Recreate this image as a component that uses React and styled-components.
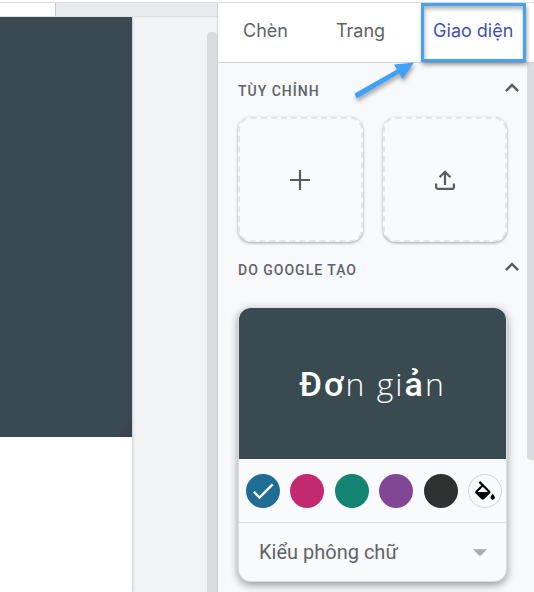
/* App.jsx */

import { useState } from "react";
import styled, { createGlobalStyle } from "styled-components";
import {
    MdArrowDropDown,
    MdCheck,
    MdKeyboardArrowUp,
} from "react-icons/md";

const TABS = ["Chèn", "Trang", "Giao diện"];

const COLORS = [
    { name: "Xanh dương", value: "#1f6c95" },
    { name: "Hồng", value: "#c22a70" },
    { name: "Xanh lục", value: "#148472" },
    { name: "Tím", value: "#824794" },
    { name: "Đen", value: "#2f3030" },
];

const App = () => {
    const [tab, setTab] = useState("Giao diện");
    const [color, setColor] = useState("#1f6c95");

    return (
        <>
            <GlobalStyle />
            <Shell>
                <Editor>
                    <Ruler><RulerStart /></Ruler>
                    <Workspace>
                        <Page><Banner /></Page>
                        <EditorScroll />
                    </Workspace>
                </Editor>
                <Sidebar>
                    <Tabs>
                        {TABS.map((name) => (
                            <Tab key={name} $active={tab === name} onClick={() => setTab(name)}>
                                {name}
                                {name === "Giao diện" && <Highlight />}
                            </Tab>
                        ))}
                    </Tabs>
                    <Pointer viewBox="0 0 70 50" aria-hidden="true">
                        <path d="M6.500 36.500 49 12.600 46 7.500 66 5.500 54.500 22 51.300 16.600 8.700 41.500Z" fill="#3fa2f7" />
                    </Pointer>
                    <PanelBody>
                        <Content>
                            <SectionHead>
                                <SectionTitle>TÙY CHỈNH</SectionTitle>
                                <IconButton aria-label="Thu gọn"><MdKeyboardArrowUp size={28} /></IconButton>
                            </SectionHead>
                            <Tiles>
                                <Tile aria-label="Tạo giao diện">
                                    <svg width="20" height="20" viewBox="0 0 20 20" fill="none" stroke="#5a5c60" strokeWidth="2.2">
                                        <path d="M10 0v20M0 10h20" />
                                    </svg>
                                </Tile>
                                <Tile aria-label="Nhập giao diện">
                                    <svg width="20" height="20" viewBox="0 0 20 20" fill="none" stroke="#5a5c60" strokeWidth="2.2">
                                        <path d="M10 15V2M4.600 7.200 10 1.800l5.400 5.400" />
                                        <path d="M1.100 13.500v3.400a2 2 0 0 0 2 2h13.800a2 2 0 0 0 2-2v-3.400" />
                                    </svg>
                                </Tile>
                            </Tiles>
                            <SectionHead>
                                <SectionTitle>DO GOOGLE TẠO</SectionTitle>
                                <IconButton aria-label="Thu gọn"><MdKeyboardArrowUp size={28} /></IconButton>
                            </SectionHead>
                            <ThemeCard>
                                <Preview>
                                    <Strong>Đơ</Strong>n gi<Strong>ả</Strong>n
                                </Preview>
                                <Swatches>
                                    {COLORS.map((c) => (
                                        <Swatch key={c.value} $color={c.value}>
                                            <input
                                                type="radio"
                                                name="color"
                                                aria-label={c.name}
                                                checked={color === c.value}
                                                onChange={() => setColor(c.value)}
                                            />
                                            {color === c.value && <MdCheck size={28} />}
                                        </Swatch>
                                    ))}
                                    <CustomColor aria-label="Màu tùy chỉnh">
                                        <svg width="22" height="20" viewBox="2 0 20 18" fill="currentColor">
                                            <path d="M16.560 8.940 7.620 0 6.210 1.410l2.380 2.380-5.150 5.150a1.490 1.490 0 0 0 0 2.120l5.500 5.500c.29.29.68.44 1.060.44s.77-.15 1.060-.44l5.500-5.500c.59-.58.59-1.530 0-2.120zM5.210 10 10 5.210 14.790 10zM19 11.500s-2 2.170-2 3.500c0 1.100.9 2 2 2s2-.9 2-2c0-1.330-2-3.500-2-3.500z" />
                                        </svg>
                                    </CustomColor>
                                </Swatches>
                                <FontRow>
                                    <FontSelect aria-label="Kiểu phông chữ">
                                        <option>Kiểu phông chữ</option>
                                    </FontSelect>
                                    <MdArrowDropDown size={34} />
                                </FontRow>
                            </ThemeCard>
                        </Content>
                        <PanelScroll />
                    </PanelBody>
                </Sidebar>
            </Shell>
        </>
    );
};

export default App;

const GlobalStyle = createGlobalStyle`
    * {
        box-sizing: border-box;
    }
    body {
        margin: 0;
        background: #fff;
        font-family: Roboto, "Liberation Sans", sans-serif;
    }
`;

const Shell = styled.div`
    display: flex;
    min-height: 100vh;
    padding-top: 2px;
    overflow: hidden;
`;

/* Editor */
const Editor = styled.main`
    display: flex;
    flex: 1;
    flex-direction: column;
    border-top: 1px solid #dadce0;
`;

const Ruler = styled.div`
    height: 14px;
    background: #e8eaed;
    border-bottom: 1px solid #dcdee0;
`;

const RulerStart = styled.div`
    width: 56px;
    height: 100%;
    background: #fff;
    border-right: 1px solid #c4c6c9;
`;

const Workspace = styled.div`
    display: flex;
    flex: 1;
    justify-content: space-between;
    background: #f1f3f4;
`;

const Page = styled.div`
    width: 132px;
    background: #fff;
    box-shadow: 0 0 3px rgba(0, 0, 0, 0.3);
    clip-path: inset(0 -6px 0 0);
`;

const Banner = styled.div`
    height: 420px;
    background: linear-gradient(135deg, #3a4a52 96%, #39444b 98%);
`;

const EditorScroll = styled.div`
    width: 10px;
    margin-top: 15px;
    border-radius: 4px 4px 0 0;
    background: #dadbdc;
`;

/* Sidebar */
const Sidebar = styled.aside`
    position: relative;
    display: flex;
    flex-direction: column;
    width: 317px;
    border-top: 1px solid #dadce0;
    border-left: 1px solid #d0d2d5;
    background: #fff;
`;

const Tabs = styled.nav`
    display: flex;
    height: 60px;
    padding-left: 25px;
    gap: 48px;
    border-bottom: 1px solid #d3d5d9;
`;

const Button = styled.button`
    padding: 0;
    border: 0;
    background: none;
    cursor: pointer;
`;

const Tab = styled(Button)`
    position: relative;
    padding-bottom: 4px;
    color: ${(props) => (props.$active ? "#3f51b5" : "#5f6368")};
    font-family: Inter, sans-serif;
    font-size: 18px;
    white-space: nowrap;
`;

const Highlight = styled.span`
    position: absolute;
    inset: 0 -13px 0 -12px;
    border: 3px solid #48a3ee;
    box-shadow: 1px 3px 4px rgba(0, 0, 0, 0.35), inset 1px 3px 4px rgba(0, 0, 0, 0.3);
`;

const Pointer = styled.svg`
    position: absolute;
    top: 54px;
    left: 130px;
    width: 70px;
    height: 50px;
    filter: drop-shadow(1px 3px 2px rgba(0, 0, 0, 0.35));
`;

const PanelBody = styled.div`
    display: flex;
    flex: 1;
    background: #f8f9fb;
`;

const Content = styled.div`
    flex: 1;
    padding: 6px 20px 10px;
`;

const SectionHead = styled.div`
    display: flex;
    align-items: center;
    justify-content: space-between;
    height: 44px;
    margin-right: -19px;
`;

const SectionTitle = styled.h2`
    margin: 0;
    color: #5f6368;
    font-size: 14px;
    font-weight: 500;
    letter-spacing: 1px;
`;

const IconButton = styled(Button)`
    display: flex;
    padding-bottom: 6px;
    color: #5a5c60;
`;

const Tiles = styled.div`
    display: grid;
    grid-template-columns: 1fr 1fr;
    gap: 20px;
    margin: 4px 0 6px;
`;

const Tile = styled(Button)`
    display: flex;
    align-items: center;
    justify-content: center;
    height: 125px;
    border: 2px dashed #e6e7e9;
    border-radius: 13px;
    background: #f9fafc;
    box-shadow: 0 1px 3px rgba(0, 0, 0, 0.35);
`;

const ThemeCard = styled.section`
    margin: 16px 1px 0;
    border-radius: 12px;
    background: #f9fafc;
    box-shadow: 0 0 0 1px #dcdee0, 0 3px 8px 1px rgba(0, 0, 0, 0.4);
    overflow: hidden;
`;

const Preview = styled.div`
    height: 151px;
    background: #394a51;
    color: #fff;
    font-family: "Open Sans", sans-serif;
    font-size: 32px;
    font-weight: 300;
    letter-spacing: 2px;
    line-height: 151px;
    text-align: center;
`;

const Strong = styled.span`
    font-family: Roboto, sans-serif;
    font-size: 34px;
    font-weight: 500;
`;

const Swatches = styled.div`
    display: flex;
    align-items: center;
    justify-content: space-between;
    height: 64px;
    padding: 0 4px 0 7px;
    border-bottom: 1px solid #dadce0;
`;

const Swatch = styled.label`
    display: grid;
    place-items: center;
    width: 34px;
    height: 34px;
    border-radius: 50%;
    background: ${(props) => props.$color};
    color: #fff;
    cursor: pointer;

    input {
        grid-area: 1 / 1;
        width: 34px;
        height: 34px;
        margin: 0;
        appearance: none;
    }
    svg {
        grid-area: 1 / 1;
        pointer-events: none;
    }
`;

const CustomColor = styled(Button)`
    display: flex;
    align-items: center;
    justify-content: center;
    width: 34px;
    height: 34px;
    border: 1px solid #d3d4d8;
    border-radius: 50%;
    color: #000;
`;

const FontRow = styled.div`
    display: grid;
    align-items: center;
    height: 58px;
    padding: 0 9px 0 20px;
    color: #a9abae;

    svg {
        grid-area: 1 / 1;
        justify-self: end;
        pointer-events: none;
    }
`;

const FontSelect = styled.select`
    grid-area: 1 / 1;
    width: 100%;
    padding: 0;
    border: 0;
    background: none;
    color: #5f6368;
    font-family: inherit;
    font-size: 20px;
    appearance: none;
`;

const PanelScroll = styled.div`
    width: 7px;
    height: 397px;
    border-radius: 0 0 0 4px;
    background: #dadce0;
`;
